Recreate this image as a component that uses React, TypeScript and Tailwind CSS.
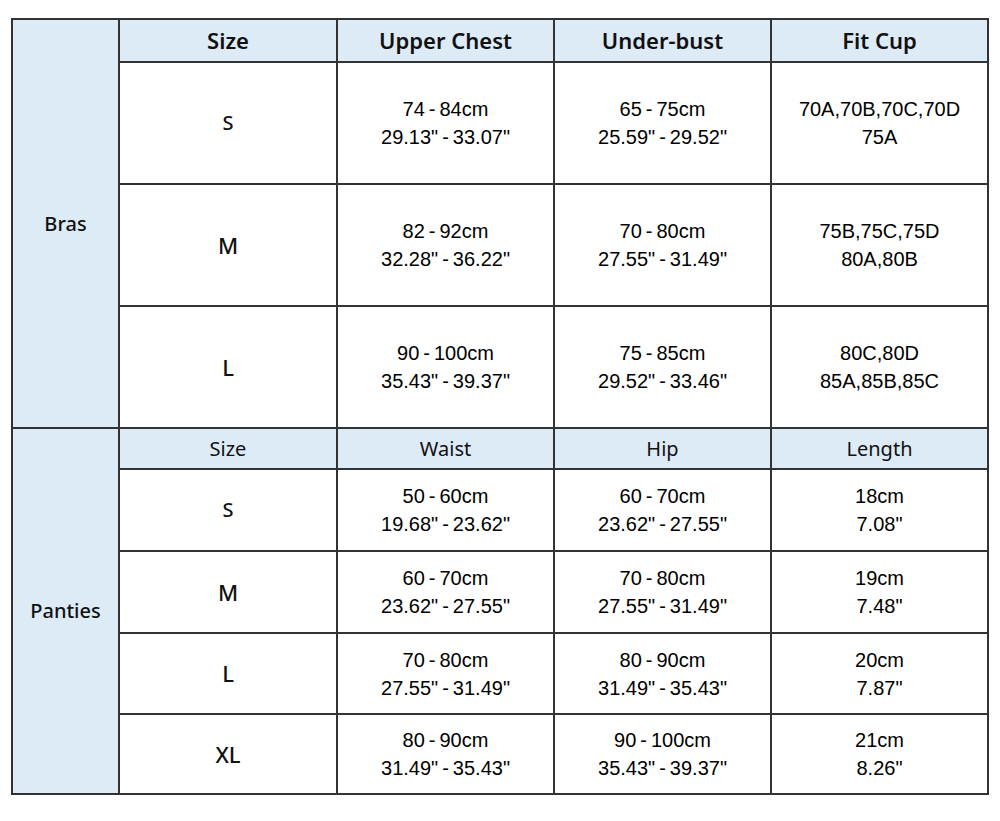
const head = "font-['Noto_Sans',sans-serif]";
const data = "font-['Liberation_Sans',Arial,sans-serif]";

type Row = { size: string; h: string; a: [string, string]; b: [string, string]; c: [string, string?] };

const bras: Row[] = [
  { size: "S", h: "h-[122px]", a: ["74-84cm", '29.13"-33.07"'], b: ["65-75cm", '25.59"-29.52"'], c: ["70A,70B,70C,70D", "75A"] },
  { size: "M", h: "h-[122px]", a: ["82-92cm", '32.28"-36.22"'], b: ["70-80cm", '27.55"-31.49"'], c: ["75B,75C,75D", "80A,80B"] },
  { size: "L", h: "h-[122px]", a: ["90-100cm", '35.43"-39.37"'], b: ["75-85cm", '29.52"-33.46"'], c: ["80C,80D", "85A,85B,85C"] },
];

const panties: Row[] = [
  { size: "S", h: "h-[82px]", a: ["50-60cm", '19.68"-23.62"'], b: ["60-70cm", '23.62"-27.55"'], c: ["18cm", '7.08"'] },
  { size: "M", h: "h-[82px]", a: ["60-70cm", '23.62"-27.55"'], b: ["70-80cm", '27.55"-31.49"'], c: ["19cm", '7.48"'] },
  { size: "L", h: "h-[81px]", a: ["70-80cm", '27.55"-31.49"'], b: ["80-90cm", '31.49"-35.43"'], c: ["20cm", '7.87"'] },
  { size: "XL", h: "h-[80px]", a: ["80-90cm", '31.49"-35.43"'], b: ["90-100cm", '35.43"-39.37"'], c: ["21cm", '8.26"'] },
];

const cell = "border-2 border-[#333] text-center align-middle p-0";

// hyphen in the reference has a little air on both sides
function spaced(s: string) {
  return s.replace("-", "\u2009-\u2009");
}

function Two({ lines }: { lines: (string | undefined)[] }) {
  return (
    <div className={`${data} text-[20px] leading-[28px] text-black`}>
      {lines.filter(Boolean).map((l, i) => (
        <div key={i}>{spaced(l!)}</div>
      ))}
    </div>
  );
}

function Section({
  label,
  headers,
  rows,
  headH,
  big,
}: {
  label: string;
  headers: string[];
  rows: Row[];
  headH: string;
  big: boolean;
}) {
  return (
    <>
      <tr className={headH}>
        <td
          rowSpan={rows.length + 1}
          className={`${cell} bg-[#ddebf7] ${head} text-[20px] font-medium text-[#111]`}
        >
          {label}
        </td>
        {headers.map((h) => (
          <td
            key={h}
            className={`${cell} bg-[#ddebf7] ${head} text-[#111] ${
              big ? "text-[22px] font-semibold" : "text-[20px]"
            }`}
          >
            {h}
          </td>
        ))}
      </tr>
      {rows.map((r) => (
        <tr key={r.size} className={r.h}>
          <td className={`${cell} ${head} ${r.size === "S" ? "text-[20px]" : "text-[22px]"} font-medium text-[#111]`}>
            {r.size}
          </td>
          <td className={cell}>
            <Two lines={r.a} />
          </td>
          <td className={cell}>
            <Two lines={r.b} />
          </td>
          <td className={cell}>
            <Two lines={r.c} />
          </td>
        </tr>
      ))}
    </>
  );
}

export default function App() {
  return (
    <div className="w-[1000px] h-[821px] bg-white pt-[18px] pl-[11px]">
      <table className="table-fixed border-collapse w-[976px]">
        <colgroup>
          <col className="w-[107px]" />
          <col className="w-[218px]" />
          <col className="w-[217px]" />
          <col className="w-[217px]" />
          <col className="w-[217px]" />
        </colgroup>
        <tbody>
          <Section
            label="Bras"
            headers={["Size", "Upper Chest", "Under-bust", "Fit Cup"]}
            rows={bras}
            headH="h-[43px]"
            big
          />
          <Section
            label="Panties"
            headers={["Size", "Waist", "Hip", "Length"]}
            rows={panties}
            headH="h-[41px]"
            big={false}
          />
        </tbody>
      </table>
    </div>
  );
}
